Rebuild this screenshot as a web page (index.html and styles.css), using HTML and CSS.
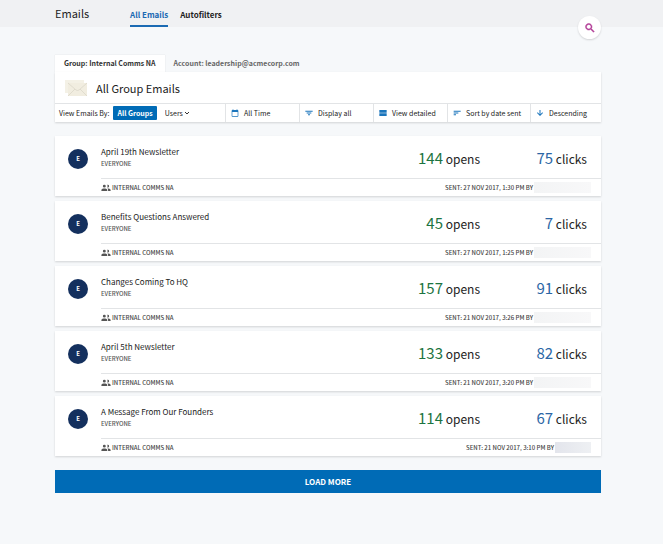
FILE: index.html
```html
<!DOCTYPE html>
<html lang="en">
<head>
    <meta charset="UTF-8">
    <meta name="viewport" content="width=device-width, initial-scale=1.0">
    <title>Emails</title>
    <link rel="stylesheet" href="styles.css">
</head>
<body>
    <svg class="sprite" aria-hidden="true">
        <symbol id="people" viewBox="0 0 24 24">
            <path d="M8 11a3.500 3.500 0 1 0 0-7 3.500 3.500 0 0 0 0 7zm8 0a3.500 3.500 0 1 0 0-7 3.500 3.500 0 0 0-1.300.3 5 5 0 0 1 0 6.400A3.500 3.500 0 0 0 16 11zM8 13c-2.500 0-7 1.200-7 3.500V19h14v-2.500C15 14.200 10.500 13 8 13zm8 0l-1 .1c1.200.8 2 1.900 2 3.400V19h6v-2.500c0-2.300-4.500-3.500-7-3.500z"/>
        </symbol>
    </svg>

    <header class="top-bar">
        <h1>Emails</h1>
        <nav class="nav">
            <a href="#" class="active">All Emails</a>
            <a href="#">Autofilters</a>
        </nav>
        <button class="search" aria-label="Search">
            <svg viewBox="0 0 24 24"><path d="M15.500 14h-.79l-.28-.27C15.410 12.590 16 11.110 16 9.500 16 5.910 13.090 3 9.500 3S3 5.910 3 9.500 5.910 16 9.500 16c1.610 0 3.090-.59 4.230-1.570l.27.28v.79l5 4.990L20.490 19l-4.990-5zm-6 0C7.010 14 5 11.990 5 9.500S7.010 5 9.500 5 14 7.010 14 9.500 11.990 14 9.500 14z"/></svg>
        </button>
    </header>

    <main class="content">
        <nav class="tabs">
            <a href="#" class="active">Group: Internal Comms NA</a>
            <a href="#">Account: leadership@acmecorp.com</a>
        </nav>

        <section class="panel">
            <div class="panel-title">
                <svg class="mail" viewBox="0 0 22 16">
                    <rect x="0" y="0" width="19" height="13" fill="#f4f1e6"/>
                    <rect x="3" y="3" width="19" height="13" fill="#f1ede0"/>
                    <path d="M3 3l8 7q1.500 1 3 0l8-7M3 16l7-7M22 16l-7-7" fill="none" stroke="#d8d4c6" stroke-width="0.700"/>
                </svg>
                <h2>All Group Emails</h2>
            </div>
            <div class="filters">
                <div class="view-by">
                    <span>View Emails By:</span>
                    <button class="groups">All Groups</button>
                    <label class="users">
                        <select aria-label="Users"><option>Users</option></select>
                        <svg viewBox="0 0 6 6"><path d="M1 2l2 2 2-2" fill="none" stroke="#333" stroke-width="1"/></svg>
                    </label>
                </div>
                <button class="filter">
                    <svg viewBox="0 0 24 24"><path d="M20 3h-1V1h-2v2H7V1H5v2H4c-1.100 0-2 .9-2 2v16c0 1.100.9 2 2 2h16c1.100 0 2-.9 2-2V5c0-1.100-.9-2-2-2zm0 18H4V9h16v12z"/></svg>
                    All Time
                </button>
                <button class="filter">
                    <svg viewBox="0 0 24 24"><path d="M9 19h6v-3H9v3zM1 5v3h22V5H1zm4 8.500h14v-3H5v3z"/></svg>
                    Display all
                </button>
                <button class="filter">
                    <svg viewBox="0 0 24 24"><path d="M1 3h22v8H1zM1 13h22v8H1z"/></svg>
                    View detailed
                </button>
                <button class="filter">
                    <svg viewBox="0 0 24 24"><path d="M2 19h7v-3H2v3zM2 5v3h21V5H2zm0 8.500h14v-3H2v3z"/></svg>
                    Sort by date sent
                </button>
                <button class="filter">
                    <svg viewBox="0 0 24 24"><path d="M21 12l-2-2-5.500 5.500V3h-3v12.500L5 10l-2 2 9 9 9-9z"/></svg>
                    Descending
                </button>
            </div>
        </section>

        <section class="emails">
            <article class="email">
                <div class="avatar">E</div>
                <div class="summary">
                    <h3>April 19th Newsletter</h3>
                    <p>EVERYONE</p>
                </div>
                <div class="stat opens"><strong>144</strong> opens</div>
                <div class="stat clicks"><strong>75</strong> clicks</div>
                <footer>
                    <span class="group"><svg><use href="#people"/></svg>INTERNAL COMMS NA</span>
                    <span class="sent">SENT: 27 NOV 2017, 1:30 PM BY<i class="sender"></i></span>
                </footer>
            </article>
            <article class="email">
                <div class="avatar">E</div>
                <div class="summary">
                    <h3>Benefits Questions Answered</h3>
                    <p>EVERYONE</p>
                </div>
                <div class="stat opens"><strong>45</strong> opens</div>
                <div class="stat clicks"><strong>7</strong> clicks</div>
                <footer>
                    <span class="group"><svg><use href="#people"/></svg>INTERNAL COMMS NA</span>
                    <span class="sent">SENT: 27 NOV 2017, 1:25 PM BY<i class="sender"></i></span>
                </footer>
            </article>
            <article class="email">
                <div class="avatar">E</div>
                <div class="summary">
                    <h3>Changes Coming To HQ</h3>
                    <p>EVERYONE</p>
                </div>
                <div class="stat opens"><strong>157</strong> opens</div>
                <div class="stat clicks"><strong>91</strong> clicks</div>
                <footer>
                    <span class="group"><svg><use href="#people"/></svg>INTERNAL COMMS NA</span>
                    <span class="sent">SENT: 21 NOV 2017, 3:26 PM BY<i class="sender"></i></span>
                </footer>
            </article>
            <article class="email">
                <div class="avatar">E</div>
                <div class="summary">
                    <h3>April 5th Newsletter</h3>
                    <p>EVERYONE</p>
                </div>
                <div class="stat opens"><strong>133</strong> opens</div>
                <div class="stat clicks"><strong>82</strong> clicks</div>
                <footer>
                    <span class="group"><svg><use href="#people"/></svg>INTERNAL COMMS NA</span>
                    <span class="sent">SENT: 21 NOV 2017, 3:20 PM BY<i class="sender"></i></span>
                </footer>
            </article>
            <article class="email">
                <div class="avatar">E</div>
                <div class="summary">
                    <h3>A Message From Our Founders</h3>
                    <p>EVERYONE</p>
                </div>
                <div class="stat opens"><strong>114</strong> opens</div>
                <div class="stat clicks"><strong>67</strong> clicks</div>
                <footer>
                    <span class="group"><svg><use href="#people"/></svg>INTERNAL COMMS NA</span>
                    <span class="sent">SENT: 21 NOV 2017, 3:10 PM BY<i class="sender short"></i></span>
                </footer>
            </article>
        </section>

        <button class="load-more">LOAD MORE</button>
    </main>
</body>
</html>
```
FILE: styles.css
```css
* {
    box-sizing: border-box;
}

body {
    margin: 0;
    background: #f6f8fa;
    color: #222;
    font-family: "Noto Sans CJK JP", "Open Sans", sans-serif;
    font-size: 8px;
    line-height: 12px;
}

h1, h2, h3, p {
    margin: 0;
    font-weight: normal;
}

a {
    color: inherit;
    text-decoration: none;
}

button, select {
    padding: 0;
    border: none;
    background: none;
    color: inherit;
    font: inherit;
    cursor: pointer;
}

.sprite {
    display: none;
}

.top-bar {
    position: relative;
    display: flex;
    height: 27px;
    padding: 0 62px 0 55px;
    background: #f0f1f3;
}

.top-bar h1 {
    width: 75px;
    font-size: 11px;
    line-height: 27px;
}

.nav {
    display: flex;
    gap: 12px;
    font-weight: bold;
    line-height: 29px;
}

.nav .active {
    color: #1b6ab3;
    border-bottom: 2px solid #1b6ab3;
}

.search {
    position: absolute;
    right: 62px;
    top: 16px;
    display: flex;
    align-items: center;
    justify-content: center;
    width: 23px;
    height: 23px;
    border-radius: 50%;
    background: #fff;
    box-shadow: 0 1px 2px rgba(0, 0, 0, 0.15);
}

.search svg {
    width: 12px;
    height: 12px;
    fill: #b03a94;
    stroke: #b03a94;
}

.content {
    padding: 28px 62px 40px 55px;
}

.tabs {
    display: flex;
    color: #666;
    font-size: 7px;
    font-weight: bold;
    line-height: 17px;
}

.tabs a {
    padding: 0 9px;
}

.tabs .active {
    background: #fff;
    color: #333;
    box-shadow: 0 0 1px rgba(0, 0, 0, 0.15);
}

.panel {
    position: relative;
    background: #fff;
    box-shadow: 0 1px 2px rgba(0, 0, 0, 0.15);
}

.panel-title {
    display: flex;
    align-items: center;
    gap: 9px;
    height: 31px;
    padding-left: 10px;
}

.mail {
    width: 22px;
    height: 16px;
}

.panel-title h2 {
    font-size: 11px;
    line-height: 16px;
}

.filters {
    display: grid;
    grid-template-columns: 170fr 74fr 74fr 74fr 83fr 71fr;
    height: 19px;
    border-top: 1px solid #e2e4e6;
    font-size: 7px;
    white-space: nowrap;
}

.view-by {
    display: flex;
    align-items: center;
    gap: 4px;
    padding-left: 4px;
}

.groups {
    height: 14px;
    padding: 0 4px;
    border-radius: 1px;
    background: #006bb6;
    color: #fff;
    font-weight: bold;
}

.users {
    display: flex;
    align-items: center;
    padding-left: 4px;
}

.users select {
    appearance: none;
}

.users svg {
    width: 6px;
    height: 6px;
}

.filter {
    display: flex;
    align-items: center;
    gap: 5px;
    padding-left: 5px;
    border-left: 1px solid #e2e4e6;
}

.filter svg {
    width: 8px;
    height: 8px;
    fill: #1b75bc;
}

.emails {
    display: grid;
    gap: 5px;
    margin-top: 14px;
}

.email {
    display: grid;
    grid-template-columns: 46px 1fr 120px 107px;
    grid-template-rows: 42px 18px;
    align-items: center;
    padding-right: 14px;
    background: #fff;
    box-shadow: 0 1px 2px rgba(0, 0, 0, 0.15);
}

.avatar {
    width: 20px;
    height: 20px;
    margin: 4px 0 0 13px;
    border-radius: 50%;
    background: #14305e;
    color: #fff;
    font-size: 6px;
    font-weight: bold;
    line-height: 20px;
    text-align: center;
}

.summary {
    padding-top: 2px;
}

.summary h3 {
    font-size: 8px;
}

.summary p {
    color: #555;
    font-size: 6px;
    font-weight: 500;
}

.stat {
    padding-top: 2px;
    font-size: 12px;
    line-height: 20px;
    text-align: right;
}

.stat strong {
    font-size: 15px;
    font-weight: normal;
}

.opens strong {
    color: #1c7441;
}

.clicks strong {
    color: #2b66a5;
}

.email footer {
    grid-column: 2 / -1;
    display: flex;
    align-items: center;
    justify-content: space-between;
    height: 18px;
    margin-right: -14px;
    padding-right: 10px;
    border-top: 1px solid #e2e4e6;
    color: #444;
    font-size: 6px;
    font-weight: 500;
}

.group, .sent {
    display: flex;
    align-items: center;
    gap: 1px;
}

.group svg {
    width: 10px;
    height: 10px;
    fill: #555;
}

.sender {
    width: 57px;
    height: 11px;
    background: linear-gradient(90deg, #f3f4f5, #f8f8f9);
}

.sender.short {
    width: 36px;
    background: linear-gradient(90deg, #e3e5ec, #eef0f3);
}

.load-more {
    display: block;
    width: 100%;
    height: 23px;
    margin-top: 14px;
    background: #006bb6;
    color: #fff;
    font-weight: bold;
}
```
